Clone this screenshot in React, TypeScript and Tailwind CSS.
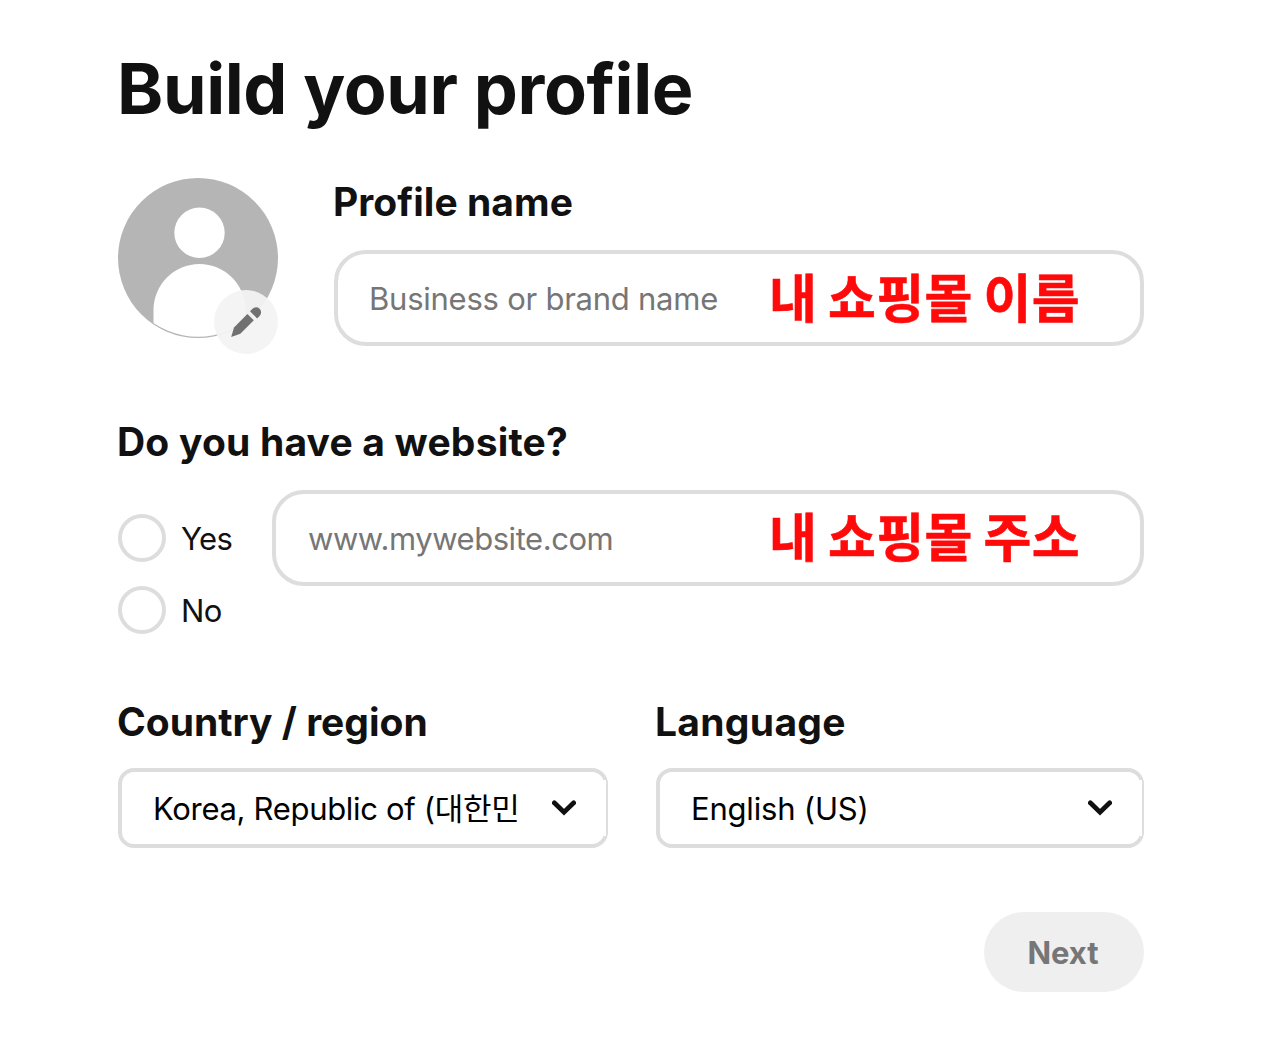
import { useState } from 'react'

const websiteOptions = ['Yes', 'No']

function Avatar() {
  return (
    <div className="relative h-40 w-40 shrink-0">
      <svg viewBox="0 0 160 160" className="h-40 w-40">
        <defs>
          <clipPath id="avatar-clip">
            <circle cx="80" cy="80" r="78.8" />
          </clipPath>
        </defs>
        <circle cx="80" cy="80" r="80" fill="#b5b5b5" />
        <circle cx="81.5" cy="54.8" r="25.2" fill="#fff" />
        <path d="M35.5 160v-28a46 46 0 0 1 92 0v28z" fill="#fff" clipPath="url(#avatar-clip)" />
      </svg>
      <button className="absolute left-24 top-28 h-16 w-16 rounded-full bg-[#f3f3f3]/95">
        <svg viewBox="0 0 64 64" className="h-16 w-16" fill="#717171">
          <path d="M20 37.4 33.4 23.9l6.4 6.4L26.3 43.8 17.2 47z" />
          <path d="m36 21.3 2.5-2.5a5 5 0 0 1 7.1 7.1l-2.5 2.5z" />
        </svg>
      </button>
    </div>
  )
}

function TextField({ placeholder, note, className, noteClassName }: { placeholder: string; note: string; className: string; noteClassName: string }) {
  return (
    <div className={`flex h-24 items-center rounded-[32px] border-4 border-[#dddddd] bg-white ${className}`}>
      <input
        placeholder={placeholder}
        className="w-0 min-w-0 flex-1 bg-transparent pt-0.5 text-[31px] leading-10 tracking-[inherit] outline-none placeholder:text-[#767676]"
      />
      <span className={`w-[371px] shrink-0 whitespace-nowrap font-['Noto_Sans_CJK_KR',sans-serif] text-[52px] font-bold leading-[60px] tracking-[0.4px] text-[#ff0a0a] [-webkit-text-stroke:0.6px_#ff0a0a] [word-spacing:-1.4px] ${noteClassName}`}>
        {note}
      </span>
    </div>
  )
}

function SelectField({ label, value, className, labelClassName, valueClassName }: { label: string; value: string; className: string; labelClassName: string; valueClassName: string }) {
  return (
    <div className={className}>
      <h2 className={`-ml-px text-[39px] font-bold leading-[48px] ${labelClassName}`}>{label}</h2>
      <button className="relative mt-[22px] flex h-20 w-full items-center justify-between rounded-2xl border-4 border-[#dddddd] bg-white pl-[31px] pr-7 text-left text-black">
        <span className={`w-[366px] overflow-hidden whitespace-nowrap pt-0.5 text-[31px] leading-10 ${valueClassName}`}>{value}</span>
        <svg viewBox="0 0 24 16" className="h-4 w-6" fill="none" stroke="#111" strokeWidth="4.8">
          <path d="M2.3 2.8 12 12.2 21.7 2.8" strokeLinecap="round" />
        </svg>
        <span className="absolute -right-0.5 top-2 h-14 w-1 bg-white" />
      </button>
    </div>
  )
}

export default function App() {
  const [choice, setChoice] = useState('')

  return (
    <div className="min-h-[1046px] w-[1282px] bg-white pl-[118px] pr-[138px] pt-[46px] font-['Inter','Noto_Sans_CJK_KR',sans-serif] text-[#111]">
      <h1 className="-ml-px text-[70px] font-bold leading-[86px] tracking-[-0.38px]">Build your profile</h1>

      <section className="mt-[46px] flex">
        <Avatar />
        <div className="ml-14 min-w-0 flex-1">
          <h2 className="-ml-px text-[39px] font-bold leading-[48px] tracking-[0.05px]">Profile name</h2>
          <TextField
            placeholder="Business or brand name"
            note="내 쇼핑몰 이름"
            className="mt-6 pl-[31px] tracking-[-0.24px]"
            noteClassName="pb-1"
          />
        </div>
      </section>

      <section className="mt-[72px]">
        <h2 className="-ml-px text-[39px] font-bold leading-[48px] tracking-[0.2px]">Do you have a website?</h2>
        <div className="mt-6 flex">
          <div className="flex w-[154px] shrink-0 flex-col gap-6 pt-6">
            {websiteOptions.map((option) => (
              <button key={option} onClick={() => setChoice(option)} className="flex h-12 items-center">
                <span className="flex h-12 w-12 items-center justify-center rounded-full border-4 border-[#dddddd]">
                  {choice === option && <span className="h-5 w-5 rounded-full bg-[#111]" />}
                </span>
                <span className="ml-[15px] pt-0.5 text-[31px] leading-10 tracking-[-0.6px]">{option}</span>
              </button>
            ))}
          </div>
          <TextField
            placeholder="www.mywebsite.com"
            note="내 쇼핑몰 주소"
            className="min-w-0 flex-1 pl-8 tracking-[-0.45px]"
            noteClassName="pb-1.5"
          />
        </div>
      </section>

      <section className="mt-16 flex gap-12">
        <SelectField
          label="Country / region"
          value="Korea, Republic of (대한민국)"
          className="w-[490px]"
          labelClassName="tracking-normal"
          valueClassName="tracking-[-0.32px]"
        />
        <SelectField
          label="Language"
          value="English (US)"
          className="w-[488px]"
          labelClassName="tracking-[0.3px]"
          valueClassName="tracking-[-0.2px]"
        />
      </section>

      <div className="mt-16 flex justify-end">
        <button className="h-20 w-40 rounded-full bg-[#efefef] pr-0.5 pt-0.5 text-[31px] font-bold text-[#767676]">Next</button>
      </div>
    </div>
  )
}
